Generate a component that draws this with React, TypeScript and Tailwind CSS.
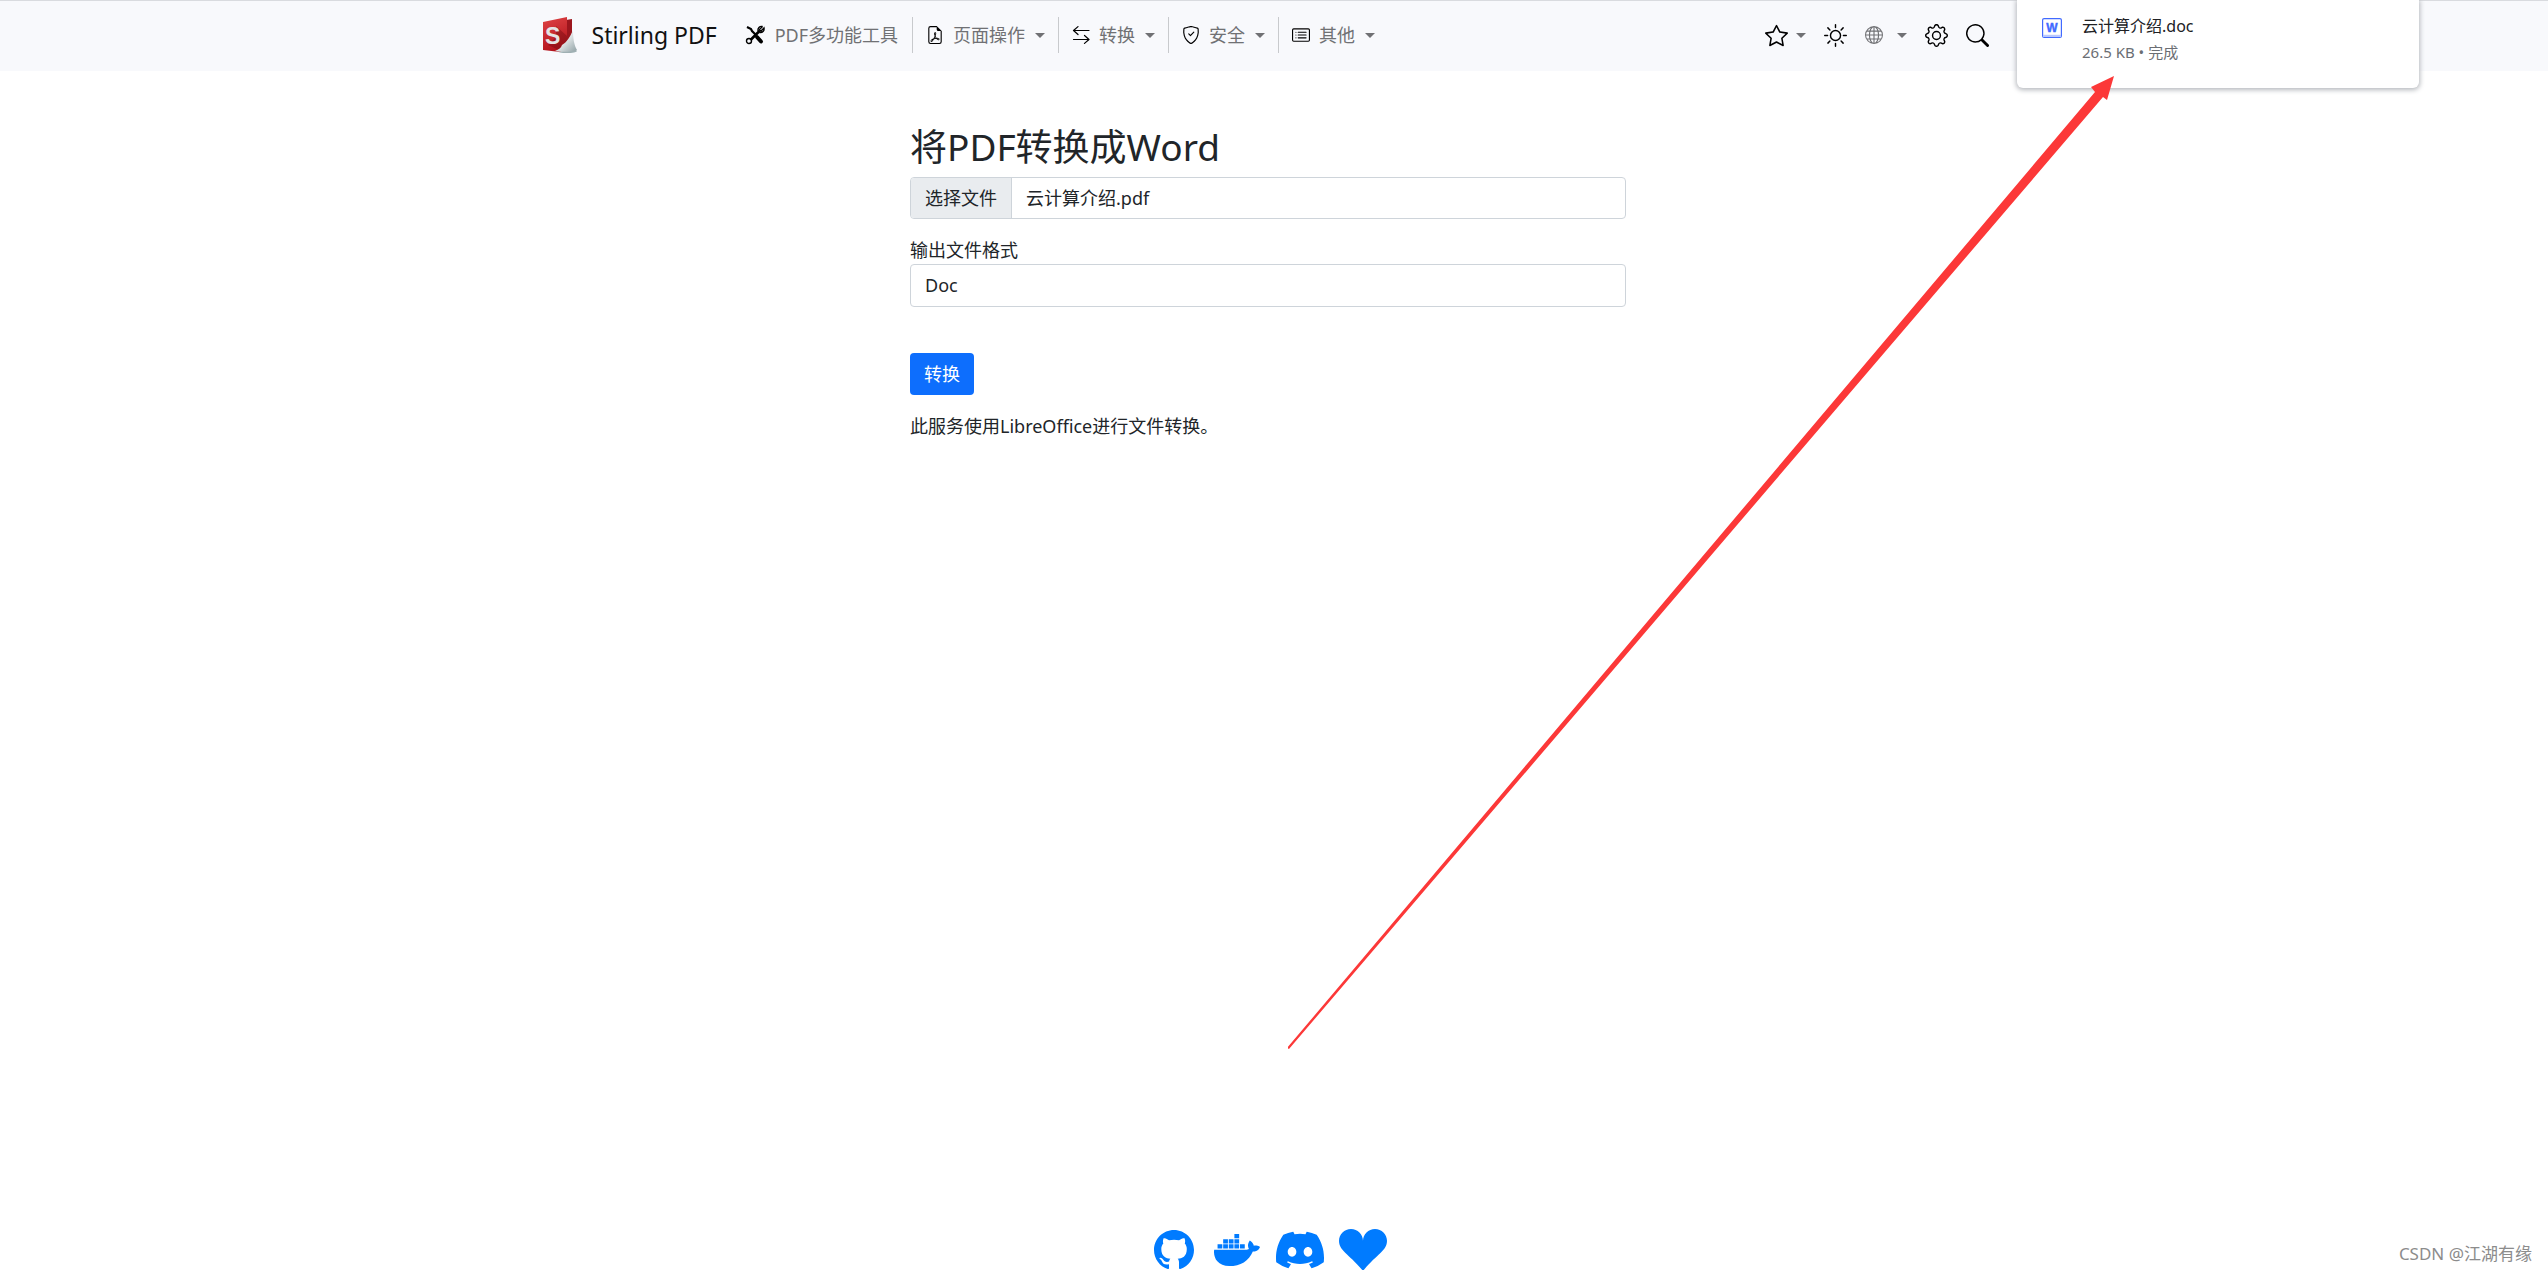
import { useId } from 'react';
import {
  BsCardList,
  BsDiscord,
  BsFileEarmarkPdf,
  BsGear,
  BsGithub,
  BsGlobe,
  BsSearch,
  BsShieldCheck,
  BsStar,
  BsSuitHeartFill,
  BsSun,
} from 'react-icons/bs';
import { FaDocker } from 'react-icons/fa';

const menus = [
  { label: '页面操作', icon: <BsFileEarmarkPdf size={18} /> },
  { label: '转换', icon: <SwapIcon /> },
  { label: '安全', icon: <BsShieldCheck size={18} /> },
  { label: '其他', icon: <BsCardList size={18} /> },
];

const socials = [
  { label: 'GitHub', icon: <BsGithub size={40} /> },
  { label: 'Docker', icon: <FaDocker size={46} /> },
  { label: 'Discord', icon: <BsDiscord size={48} /> },
  { label: 'Sponsor', icon: <BsSuitHeartFill size={48} /> },
];

function Logo() {
  return (
    <svg viewBox="0 0 36 36" className="size-9" aria-hidden="true">
      <defs>
        <linearGradient id="cover" x1="0" y1="0" x2="0.3" y2="1">
          <stop offset="0" stopColor="#e04545" />
          <stop offset="1" stopColor="#b3141d" />
        </linearGradient>
        <linearGradient id="page" x1="0" y1="0" x2="1" y2="1">
          <stop offset="0.3" stopColor="#ffffff" />
          <stop offset="1" stopColor="#8fa0a4" />
        </linearGradient>
      </defs>
      <ellipse cx="25" cy="34" rx="10" ry="2" fill="#9fb0b3" />
      <path d="M24 3l6-1v20l-6 6z" fill="#9c161d" />
      <path d="M1 5L25 0v28l-7 7L1 33z" fill="url(#cover)" />
      <path d="M14 9l11 10v8l-6 7-13-6 8-8z" fill="#7c0d14" opacity="0.5" />
      <path d="M31 13c0 8 1 15 4 20-6 2-14 2.5-22 1 4-2 6-3 7-6 5-3 8-8 11-15z" fill="url(#page)" />
      <text x="3" y="27" fontSize="23" fontWeight="700" fill="#e4e4e4" fontFamily="Liberation Sans, sans-serif">S</text>
    </svg>
  );
}

function ToolsIcon() {
  return (
    <svg viewBox="0 0 20 20" className="size-5" fill="none" stroke="#000" aria-hidden="true">
      <path d="M2 2l4 2 1 2 4 4" strokeWidth="2.2" />
      <path d="M12 12l4 4.5" strokeWidth="4" strokeLinecap="round" />
      <path d="M5.500 15L15 5.500" strokeWidth="2.600" />
      <circle cx="4" cy="16" r="2.500" strokeWidth="1.400" />
      <path d="M17.500 1.500l-3 3 1.500 1.500 3-3c.5 3-1.500 5-4.500 4.500" strokeWidth="1.400" />
      <path d="M17.500 1.500c-3-.5-5 1.500-4.500 4.500" strokeWidth="1.400" />
    </svg>
  );
}

function SwapIcon() {
  return (
    <svg viewBox="0 0 18 18" className="size-[18px]" fill="none" stroke="currentColor" strokeWidth="1.200" strokeLinecap="round" strokeLinejoin="round" aria-hidden="true">
      <path d="M17 4.500H1.500M6 .6L1.500 4.500 6 8.500" />
      <path d="M1.500 13.500H17M12.500 9.500l4.500 4-4.500 3.900" />
    </svg>
  );
}

function Caret() {
  return <span className="size-0 border-x-5 border-t-5 border-x-transparent border-t-[#707174]" />;
}

function WordIcon() {
  return (
    <svg viewBox="0 0 20 20" className="size-5 shrink-0" aria-hidden="true">
      <rect x="0.600" y="0.600" width="18.800" height="18.800" rx="1.500" fill="#fff" stroke="#416aff" strokeWidth="1.200" />
      <path d="M1 16.800h18v2.200H1z" fill="#b9c8ff" />
      <text x="10" y="14" textAnchor="middle" fontSize="12" fontWeight="700" fill="#416aff" stroke="#416aff" strokeWidth="0.400" fontFamily="Liberation Sans, sans-serif">W</text>
    </svg>
  );
}

function Navbar() {
  return (
    <nav className="border-t border-[#d9dbdf] bg-[#f8f9fc] pr-3 text-black">
      <div className="mx-auto flex h-[70px] max-w-[1485px] items-center pr-[22px] pb-[2px] pl-4">
        <a href="#" className="flex items-center gap-[14px] text-[23px] text-[#111]">
          <Logo />
          Stirling PDF
        </a>
        <a href="#" className="ml-7 flex items-center gap-[10px] pr-[14px] text-lg text-[#707174]">
          <ToolsIcon />
          PDF多功能工具
        </a>
        {menus.map((menu) => (
          <button key={menu.label} type="button" className="flex h-9 items-center border-l border-[#c8cacd] px-[13px] text-lg">
            {menu.icon}
            <span className="mr-[10px] ml-[9px] text-[#707174]">{menu.label}</span>
            <Caret />
          </button>
        ))}
        <div className="ml-auto flex items-center gap-[18px]">
          <button type="button" aria-label="收藏" className="flex items-center gap-2">
            <BsStar size={23} />
            <Caret />
          </button>
          <button type="button" aria-label="主题">
            <BsSun size={23} />
          </button>
          <button type="button" aria-label="语言" className="flex items-center gap-[14px] text-[#707174]">
            <BsGlobe size={18} />
            <Caret />
          </button>
          <button type="button" aria-label="设置">
            <BsGear size={23} />
          </button>
          <button type="button" aria-label="搜索">
            <BsSearch size={23} />
          </button>
        </div>
      </div>
    </nav>
  );
}

function ConvertForm() {
  const fileId = useId();
  const formatId = useId();

  return (
    <form className="mx-auto w-full max-w-[716px] text-lg leading-[27px] text-[#212529]">
      <h2 className="mb-2 text-[37px] leading-[44px]">将PDF转换成Word</h2>
      <label htmlFor={fileId} className="flex h-[42px] cursor-pointer items-center overflow-hidden rounded border border-[#ced4da]">
        <span className="flex h-full items-center border-r border-[#ced4da] bg-[#e9ecef] px-[14px]">选择文件</span>
        <span className="px-[14px]">云计算介绍.pdf</span>
      </label>
      <input id={fileId} type="file" accept="application/pdf" className="sr-only" />
      <label htmlFor={formatId} className="mt-[18px] block">
        输出文件格式
      </label>
      <select id={formatId} className="block h-[43px] w-full appearance-none rounded border border-[#ced4da] bg-white px-[14px]">
        <option>Doc</option>
        <option>Docx</option>
        <option>Odt</option>
      </select>
      <button type="button" className="mt-[46px] block h-[42px] rounded bg-[#0d6efd] px-[14px] text-white">
        转换
      </button>
      <p className="mt-[18px]">此服务使用LibreOffice进行文件转换。</p>
    </form>
  );
}

function Download() {
  return (
    <aside className="absolute top-0 right-[129px] flex h-[88px] w-[402px] gap-5 rounded-b-md bg-white px-[25px] shadow-[0_1px_5px_1px_#b5b8bd]">
      <div className="pt-[18px]">
        <WordIcon />
      </div>
      <div className="pt-[14px]">
        <p className="text-base leading-[24px] text-[#202124]">云计算介绍.doc</p>
        <p className="text-[15px] leading-[28px] text-[#6b6e73]">26.5 KB • 完成</p>
      </div>
    </aside>
  );
}

export default function App() {
  return (
    <div className="relative flex min-h-screen flex-col overflow-hidden bg-white font-['Noto_Sans','Noto_Sans_CJK_SC',sans-serif]">
      <Navbar />
      <main className="flex-1 pt-[54px] pr-3">
        <ConvertForm />
      </main>
      <footer className="flex h-10 items-center justify-center gap-[15px] pr-3 text-[#007bff]">
        {socials.map((social) => (
          <a key={social.label} href="#" aria-label={social.label} className="flex w-12 justify-center">
            {social.icon}
          </a>
        ))}
      </footer>
      <Download />
      {/* Pointer to the finished download */}
      <svg viewBox="0 0 826 973" className="pointer-events-none absolute top-[76px] right-[434px] h-[973px] w-[826px]" aria-hidden="true">
        <path d="M826 0L803 11l4 5L-1 972l2 1L815 21l4 3z" fill="#fc3838" />
      </svg>
      <p className="absolute right-4 bottom-1 text-[17px] text-[#8c8c8c]">CSDN @江湖有缘</p>
    </div>
  );
}
